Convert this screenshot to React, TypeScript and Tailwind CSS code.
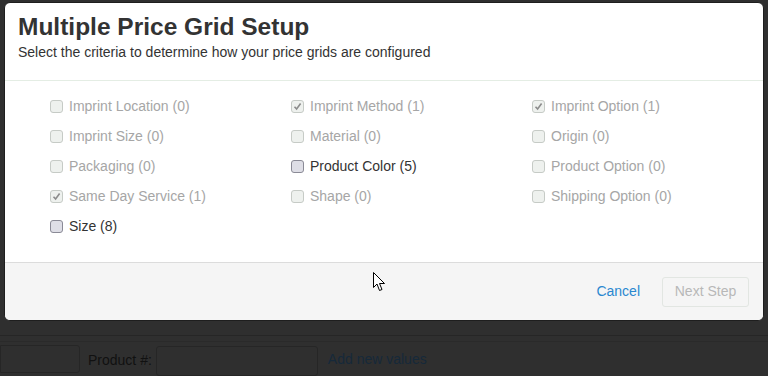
import React from "react";

type Item = { label: string; count: number; checked?: boolean; enabled?: boolean };

const items: Item[] = [
  { label: "Imprint Location", count: 0 },
  { label: "Imprint Method", count: 1, checked: true },
  { label: "Imprint Option", count: 1, checked: true },
  { label: "Imprint Size", count: 0 },
  { label: "Material", count: 0 },
  { label: "Origin", count: 0 },
  { label: "Packaging", count: 0 },
  { label: "Product Color", count: 5, enabled: true },
  { label: "Product Option", count: 0 },
  { label: "Same Day Service", count: 1, checked: true },
  { label: "Shape", count: 0 },
  { label: "Shipping Option", count: 0 },
  { label: "Size", count: 8, enabled: true },
];

const Box = ({ checked, enabled }: { checked?: boolean; enabled?: boolean }) => (
  <span
    className={
      enabled
        ? "flex h-[13px] w-[13px] items-center justify-center rounded-[3px] border border-[#8a8a96] bg-[#dedee6]"
        : "flex h-[13px] w-[13px] items-center justify-center rounded-[3px] border border-[#c6cbc6] bg-[#eef1ee]"
    }
  >
    {checked ? (
      <svg width="9" height="9" viewBox="0 0 9 9">
        <path d="M1.5 4.8 L3.6 7 L7.6 1.6" fill="none" stroke="#8c8c8c" strokeWidth="1.6" />
      </svg>
    ) : null}
  </span>
);

const Cursor = () => (
  <svg width="13" height="20" viewBox="0 0 13 20" className="absolute left-[373px] top-[272px]">
    <path d="M0.5 0.5 L0.5 15.5 L4 12 L6.5 18.5 L9 17.5 L6.5 11.5 L11.5 11.5 Z" fill="#fff" stroke="#000" strokeWidth="1" />
  </svg>
);

export default function App() {
  return (
    <div
      className="relative h-[376px] w-[768px] overflow-hidden bg-[#2f2f2f]"
      style={{ fontFamily: '"Liberation Sans", Arial, sans-serif' }}
    >
      <div className="ml-[4px] mt-[2px] flex h-[319px] w-[760px] flex-col overflow-hidden rounded-[6px] border border-[#1e1e1e] bg-white">
        <div className="h-[78px] border-b border-[#e4ede4] px-[13px] pt-[9px]">
          <h1 className="text-[24.5px] font-bold leading-[30px] text-[#333]">Multiple Price Grid Setup</h1>
          <p className="mt-[1px] text-[14px] leading-[18px] text-[#333]">
            Select the criteria to determine how your price grids are configured
          </p>
        </div>
        <div className="grid h-[181px] grid-cols-[241px_241px_241px] content-start pl-[45px] pt-[10px]">
          {items.map((it) => (
            <label key={it.label} className="flex h-[30px] items-center gap-[6px]">
              <Box checked={it.checked} enabled={it.enabled} />
              <span className={it.enabled ? "text-[14px] text-[#333]" : "text-[14px] text-[#a6a6a6]"}>
                {it.label} ({it.count})
              </span>
            </label>
          ))}
        </div>
        <div className="flex flex-1 items-center justify-end gap-[22px] border-t border-[#dcdcdc] bg-[#f5f5f5] pr-[14px]">
          <span className="text-[14px] text-[#2a88d0]">Cancel</span>
          <span className="flex h-[30px] w-[87px] items-center justify-center rounded-[3px] border border-[#e2e6e2] text-[14px] text-[#b8b8b8]">
            Next Step
          </span>
        </div>
      </div>
      <div className="mt-[14px] border-t border-[#262626]" />
      <div className="mt-[5px] flex items-center border-t border-[#2a2a2a]">
        <div className="h-[28px] w-[80px] rounded-r-[3px] border border-[#262626]" />
        <span className="ml-[8px] mt-[2px] text-[14px] text-[#111]">Product #:</span>
        <div className="ml-[4px] mt-[4px] h-[30px] w-[162px] rounded-[3px] border border-[#262626]" />
        <span className="ml-[10px] text-[14px] text-[#16293a]">Add new values</span>
      </div>
      <Cursor />
    </div>
  );
}
